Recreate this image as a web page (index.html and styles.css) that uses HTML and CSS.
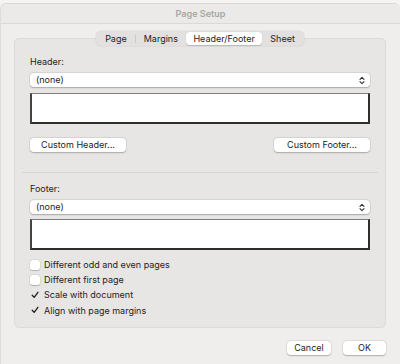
FILE: index.html
```html
<!DOCTYPE html>
<html>
<head>
<meta charset="utf-8">
<link rel="stylesheet" href="styles.css">
</head>
<body>
<div class="window">
  <div class="titlebar">Page Setup</div>
  <div class="content">
    <div class="tabs">
      <div class="tab">Page</div>
      <div class="tab-sep"></div>
      <div class="tab">Margins</div>
      <div class="tab selected">Header/Footer</div>
      <div class="tab">Sheet</div>
    </div>
    <div class="panel">
      <div class="label">Header:</div>
      <div class="popup"><span>(none)</span><svg class="chev" width="6" height="9" viewBox="0 0 6 9"><path d="M1 3.3 L3 1.3 L5 3.3 M1 5.7 L3 7.7 L5 5.7" fill="none" stroke="#333" stroke-width="1.1" stroke-linecap="round" stroke-linejoin="round"/></svg></div>
      <div class="textbox"></div>
      <div class="btnrow">
        <div class="btn wide">Custom Header...</div>
        <div class="btn wide">Custom Footer...</div>
      </div>
      <div class="sep"></div>
      <div class="label">Footer:</div>
      <div class="popup"><span>(none)</span><svg class="chev" width="6" height="9" viewBox="0 0 6 9"><path d="M1 3.3 L3 1.3 L5 3.3 M1 5.7 L3 7.7 L5 5.7" fill="none" stroke="#333" stroke-width="1.1" stroke-linecap="round" stroke-linejoin="round"/></svg></div>
      <div class="textbox small"></div>
      <div class="checks">
        <div class="check"><span class="box"></span>Different odd and even pages</div>
        <div class="check"><span class="box"></span>Different first page</div>
        <div class="check"><span class="box on"><svg width="10" height="10" viewBox="0 0 10 10"><path d="M2.2 5.2 L4.2 7.4 L7.9 2.3" fill="none" stroke="#222" stroke-width="1.3" stroke-linecap="round" stroke-linejoin="round"/></svg></span>Scale with document</div>
        <div class="check"><span class="box on"><svg width="10" height="10" viewBox="0 0 10 10"><path d="M2.2 5.2 L4.2 7.4 L7.9 2.3" fill="none" stroke="#222" stroke-width="1.3" stroke-linecap="round" stroke-linejoin="round"/></svg></span>Align with page margins</div>
      </div>
    </div>
    <div class="footer">
      <div class="btn cancel">Cancel</div>
      <div class="btn ok">OK</div>
    </div>
  </div>
</div>
</body>
</html>
```

FILE: styles.css
```css
* { box-sizing: border-box; }
html, body {
  margin: 0;
  padding: 0;
}
body {
  width: 400px;
  height: 364px;
  overflow: hidden;
  background: #f4f4f3;
  font-family: "Inter", "Liberation Sans", sans-serif;
  font-size: 9px;
  color: #232323;
}
.window {
  margin-top: 3px;
  height: 361px;
  background: #efeeec;
  border-radius: 6px 6px 0 0;
  border-top: 1px solid #d9d8d6;
  border-left: 1px solid #dedddb;
}
.titlebar {
  height: 20px;
  line-height: 19px;
  text-align: center;
  font-weight: 600;
  color: #a9a7a5;
  font-size: 9.1px;
  background: #ebeae8;
  border-bottom: 1px solid #dad9d7;
  border-radius: 6px 6px 0 0;
}
.content {
  padding: 7px 14px 0 13px;
}
.tabs {
  position: relative;
  z-index: 1;
  display: flex;
  align-items: center;
  width: max-content;
  margin: 0 auto;
  height: 15px;
  padding: 0 1px;
  background: #e2e1df;
  border-radius: 5px;
  box-shadow: 0 0 0 0.5px rgba(0,0,0,0.07);
}
.tab {
  height: 13px;
  line-height: 13px;
  padding: 0 8px;
  border-radius: 4px;
}
.tab.selected {
  background: #fff;
  padding: 0 7.5px;
  box-shadow: 0 0.5px 1px rgba(0,0,0,0.18);
}
.tab-sep {
  width: 1px;
  height: 8px;
  background: #c9c8c6;
}
.panel {
  margin-top: -8px;
  height: 290px;
  background: #e7e6e4;
  border: 1px solid #dcdbd9;
  border-radius: 5px;
  padding: 17px 15px 0 15px;
}
.label {
  height: 12px;
  line-height: 12px;
}
.popup {
  margin-top: 5px;
  height: 14px;
  background: #fff;
  border-radius: 4px;
  box-shadow: 0 0.5px 1.5px rgba(0,0,0,0.25), 0 0 0 0.5px rgba(0,0,0,0.06);
  display: flex;
  align-items: center;
  justify-content: space-between;
  padding: 0 5px 0 6px;
  line-height: 14px;
}
.chev { display: block; }
.textbox {
  margin-top: 6px;
  height: 31px;
  background: #fff;
  border-style: solid;
  border-width: 1px 2px 2px 2px;
  border-color: #7d7d7d #2e2e2e #2e2e2e #444;
}
.textbox.small {
  margin-top: 5px;
  height: 31px;
}
.btnrow {
  margin-top: 14px;
  display: flex;
  justify-content: space-between;
}
.btn {
  height: 14px;
  line-height: 14px;
  text-align: center;
  background: #fff;
  border-radius: 4px;
  box-shadow: 0 0.5px 1.5px rgba(0,0,0,0.25), 0 0 0 0.5px rgba(0,0,0,0.06);
}
.btn.wide { width: 96px; }
.sep {
  margin: 20px -8px 0 -8px;
  height: 1px;
  background: #d6d5d3;
}
.sep + .label { margin-top: 10px; }
.checks {
  margin-top: 7px;
  display: flex;
  flex-direction: column;
}
.check {
  height: 15.2px;
  display: flex;
  align-items: center;
}
.box {
  width: 10px;
  height: 10px;
  margin-right: 4px;
  border-radius: 2.5px;
  background: #fff;
  box-shadow: 0 0.5px 1px rgba(0,0,0,0.2), 0 0 0 0.5px rgba(0,0,0,0.08);
  display: flex;
  align-items: center;
  justify-content: center;
}
.box.on {
  background: transparent;
  box-shadow: none;
}
.footer {
  margin-top: 13px;
  display: flex;
  justify-content: flex-end;
  gap: 12px;
}
.btn.cancel { width: 44px; }
.btn.ok { width: 43px; }
```
